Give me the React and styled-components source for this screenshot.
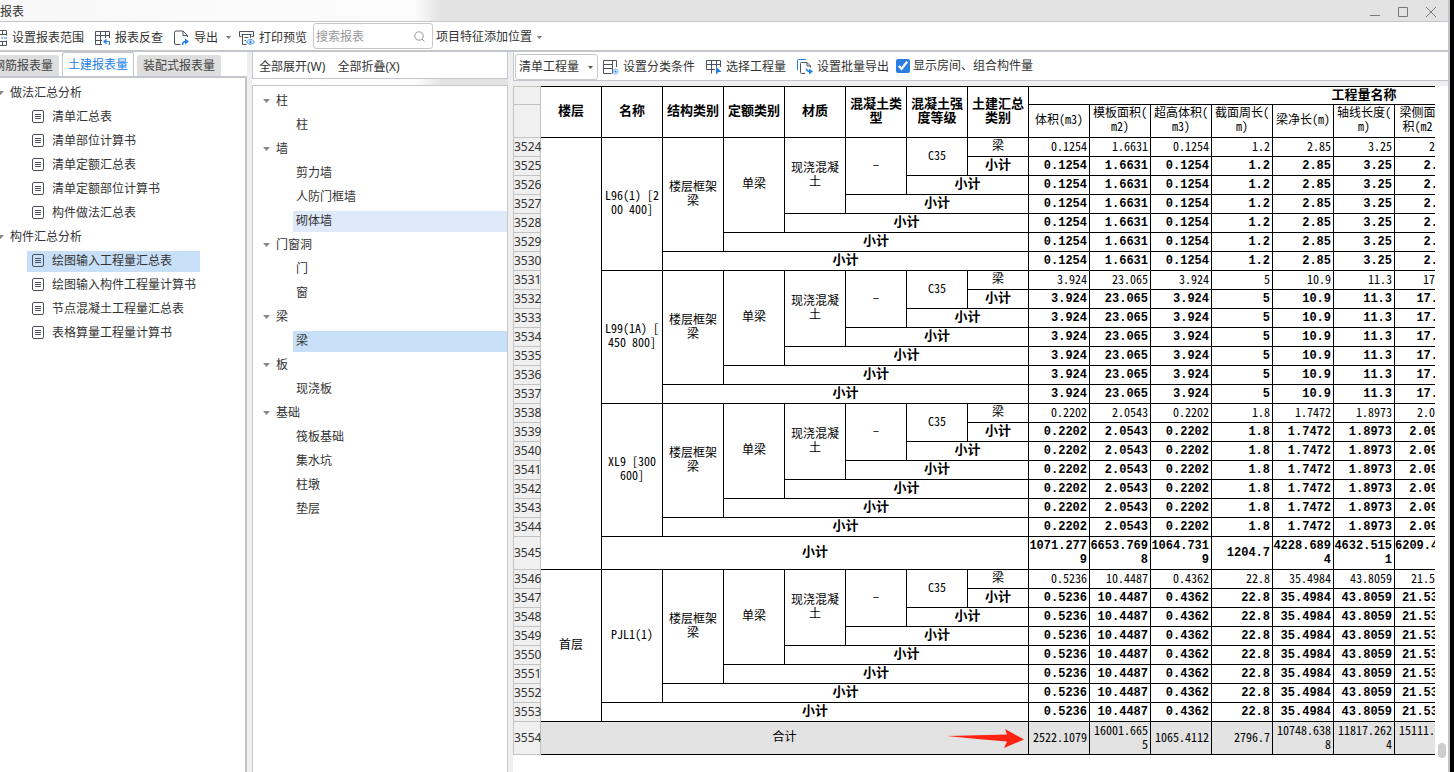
import React from "react";
import styled, { createGlobalStyle, css } from "styled-components";

const line = "#c3c6cc";
const uiFont = '"Noto Sans", "Noto Sans CJK SC", sans-serif';
const gridFont = '"Noto Sans Mono CJK SC", "DejaVu Sans Mono", "Noto Sans CJK SC", monospace';
const gridBold = '"Liberation Mono", "Noto Sans CJK SC", monospace';

const Global = createGlobalStyle`
  *, *::before, *::after { box-sizing: border-box; }
  body { margin: 0; background: #000; font: 12px/16px ${uiFont}; color: #333; }
  button, input, select { font: inherit; color: inherit; margin: 0; }
  ul { list-style: none; margin: 0; padding: 0; }
  svg { display: block; flex: none; }
`;

const Window = styled.div`
  min-height: 100vh;
  margin-right: 4px;
  display: flex;
  flex-direction: column;
  background: #fff;
  border-right: 2px solid #c0c3c8;
  overflow: hidden;
`;

const TitleBar = styled.header`
  height: 22px;
  display: flex;
  align-items: center;
  justify-content: space-between;
  padding: 1px 9px 0 0;
  background: linear-gradient(90deg, #f8f8f8 0, #fcfcfc 415px, #e3e3e3 440px);
  border-bottom: 1px solid ${line};
`;

const Title = styled.h1`
  margin: 0;
  padding-top: 2px;
  font-size: 12px;
  font-weight: 400;
`;

const WindowButtons = styled.div`
  display: flex;
  gap: 12px;
`;

const PlainButton = styled.button`
  display: flex;
  align-items: center;
  gap: ${(p) => p.$gap || 4}px;
  padding: 0;
  border: 0;
  background: none;
  white-space: nowrap;
  flex: none;
`;

const MenuCaret = styled(PlainButton)`
  margin: 0 -3px;
`;

const PositionButton = styled(PlainButton)`
  padding-top: 2px;
`;

const MainToolbar = styled.div`
  height: 30px;
  display: flex;
  align-items: center;
  border-bottom: 2px solid ${line};
  background: #fff;
`;

const ToolGroup = styled.div`
  display: flex;
  align-items: center;
  gap: 11px;
  padding-top: 3px;
  margin-left: -9px;
  margin-right: 6px;
`;

const SearchBox = styled.label`
  display: flex;
  align-items: center;
  width: 120px;
  height: 26px;
  padding: 1px 7px 0 2px;
  border: 1px solid #c8c8c8;
  border-radius: 3px;
  margin-right: 3px;
  input {
    flex: 1;
    min-width: 0;
    padding: 0;
    border: 0;
    outline: 0;
    background: none;
  }
  input::placeholder { color: #999; opacity: 1; }
`;

const Body = styled.main`
  flex: 1;
  display: flex;
  min-width: 0;
  background: #efeff0;
`;

const ReportPane = styled.nav`
  width: 247px;
  flex: none;
  display: flex;
  flex-direction: column;
`;

const Tabs = styled.div`
  display: flex;
  align-items: flex-end;
  gap: 3px;
  height: 24px;
  padding-right: 4px;
  background: #fff;
`;

const Tab = styled.button`
  flex: none;
  height: ${(p) => (p.$active ? 24 : 21)}px;
  padding: ${(p) => (p.$active ? "0 5px" : "1px 6px 0")};
  margin-left: ${(p) => (p.$cut ? -13 : 0)}px;
  border: ${(p) => (p.$active ? `1px solid ${line}` : "0")};
  border-bottom: 0;
  border-radius: 3px 3px 0 0;
  background: ${(p) => (p.$active ? "#fff" : "#dedede")};
  color: ${(p) => (p.$active ? "#2180e8" : "#444")};
  white-space: nowrap;
`;

const ReportTree = styled.div`
  flex: 1;
  padding-top: 3px;
  background: #fff;
  border-top: 2px solid ${line};
  border-right: 2px solid #c4c5c9;
`;

const TreeList = styled.ul`
  width: ${(p) => (p.$fit ? "fit-content" : "auto")};
`;

const TreeRow = styled.li`
  height: 24px;
  display: flex;
  align-items: center;
`;

const GroupButton = styled(PlainButton)`
  margin-left: ${(p) => p.$indent}px;
`;

const TreeItem = styled.button`
  flex: 1;
  height: 21px;
  display: flex;
  align-items: center;
  gap: 8px;
  margin-left: ${(p) => p.$indent}px;
  padding: 0 4px 0 ${(p) => p.$inset}px;
  border: 0;
  text-align: left;
  white-space: nowrap;
  background: ${(p) => (p.$selected ? "#c8dff8" : p.$hover ? "#dee9f9" : "transparent")};
  > svg { margin-bottom: 2px; }
`;

const ComponentPane = styled.section`
  width: 256px;
  flex: none;
  margin-left: 5px;
  display: flex;
  flex-direction: column;
  background: linear-gradient(90deg, #fff 0, #fcfcfc 165px, #e3e3e3 190px);
`;

const ExpandBar = styled.div`
  height: 27px;
  display: flex;
  align-items: center;
  gap: 12px;
  padding: 4px 6px 0;
  background: #fff;
  border: 1px solid ${line};
  border-top: 0;
`;

const ComponentTree = styled.div`
  flex: 1;
  margin-top: 6px;
  padding-top: 3px;
  background: #fff;
  border: 1px solid #c8c8cc;
  border-bottom: 0;
`;

const ResultPane = styled.section`
  flex: 1;
  min-width: 0;
  margin-left: 5px;
  display: flex;
  flex-direction: column;
`;

const ResultToolbar = styled.div`
  height: 29px;
  display: flex;
  align-items: center;
  gap: 11px;
  padding: 2px 1px 0;
  background: #fff;
  border: 1px solid ${line};
  border-top: 0;
  border-right: 0;
`;

const SelectBox = styled.div`
  display: grid;
  align-items: center;
  margin-right: -6px;
  > * { grid-area: 1 / 1; }
  > svg { justify-self: end; margin-right: 5px; pointer-events: none; }
  select {
    appearance: none;
    width: 83px;
    height: 26px;
    padding: 0 14px 0 3px;
    border: 1px solid #c8c8c8;
    border-radius: 3px;
    background: #fff;
  }
`;

const CheckLabel = styled.label`
  display: flex;
  align-items: center;
  gap: 3px;
  margin-left: -4px;
  padding-bottom: 2px;
  white-space: nowrap;
  input { width: 14px; height: 14px; accent-color: #2a7de1; }
`;

const SheetArea = styled.div`
  flex: 1;
  display: flex;
  margin-top: 5px;
  background: #fff;
`;

const SheetClip = styled.div`
  flex: 1;
  min-width: 0;
  overflow: hidden;
`;

const Scrollbar = styled.div`
  width: 13px;
  flex: none;
  display: flex;
  align-items: flex-end;
  padding: 0 2px 14px 3px;
`;

const Thumb = styled.div`
  width: 8px;
  height: 15px;
  border-radius: 4px;
  background: #cdcdcd;
`;

const Sheet = styled.table`
  width: 1187px;
  table-layout: fixed;
  border-collapse: separate;
  border-spacing: 0;
  color: #000;
  font: 12px/14px ${gridFont};
`;

const cell = css`
  padding: 0 1px;
  border-right: 1px solid #000;
  border-bottom: 1px solid #000;
  vertical-align: middle;
`;

const HeadCell = styled.th`
  ${cell}
  border-top: ${(p) => (p.$top ? "1px solid #000" : "0")};
  font: ${(p) => (p.$unit ? `400 12px/14px ${gridFont}` : `700 13px/14px ${gridBold}`)};
  padding-right: ${(p) => (p.$edge ? 16 : 1)}px;
  padding-bottom: ${(p) => (p.$unit ? 4 : 0)}px;
  white-space: ${(p) => (p.$unit ? "nowrap" : "normal")};
`;

const RowNumber = styled.th`
  height: ${(p) => (p.$tall ? 33 : 19)}px;
  padding: 0;
  border: 1px solid #c3c3c3;
  border-top-width: ${(p) => (p.$top ? 1 : 0)}px;
  background: #f0f0f0;
  color: #333;
  font: 12px/16px ${uiFont};
  text-align: center;
  white-space: nowrap;
`;

const TextCell = styled.td`
  ${cell}
  padding-bottom: 4px;
  text-align: center;
  white-space: pre-line;
`;

const SubtotalCell = styled(TextCell)`
  padding-bottom: 0;
  font: 700 13px/14px ${gridBold};
`;

const TotalCell = styled(TextCell)`
  position: relative;
  background: #e3e3e3;
  > svg { position: absolute; right: 4px; top: 7px; }
`;

const NumberCell = styled.td`
  ${cell}
  padding: 0 2px 2px 0;
  text-align: right;
  word-break: break-all;
  background: ${(p) => (p.$total ? "#e3e3e3" : "transparent")};
  ${(p) => p.$bold && css`
    padding-bottom: 0;
    font: 700 12px/14px ${gridBold};
  `}
  ${(p) => p.$edge && css`
    padding-right: ${p.$bold ? 17 : 20}px;
    white-space: nowrap;
    word-break: normal;
  `}
`;

const Caret = ({ w = 6, color = "#777" }) => (
  <svg width={w} height={Math.ceil(w / 2)} viewBox="0 0 6 3" preserveAspectRatio="none" aria-hidden="true">
    <path d="M0 0H6L3 3Z" fill={color} />
  </svg>
);

const Icon = ({ children, w = 16 }) => (
  <svg width={w} height="16" viewBox={`0 0 ${w} 16`} fill="none" stroke="#4c535e" aria-hidden="true">
    {children}
  </svg>
);

const RangeIcon = () => (
  <Icon>
    <path d="M1.500 5.500V.5H15.500V5.500M1.500 10.500V15.500H15.500V10.500M6.500 .5V5M6.500 11V15.500M11.500 .5V5M11.500 11V15.500M1.500 4.500H15.500M1.500 11.500H15.500" />
    <path d="M1 8H4M6 8H9M10 8H12M13 8H16" stroke="#2180e8" />
  </Icon>
);

const TraceIcon = () => (
  <Icon>
    <path d="M7 14.500H.5V1.500H14.500V8M.5 5.500H14.500M.5 10.500H7M5.500 1.500V14.500M10.500 1.500V8" />
    <path d="M14.500 15V11.500H9.500" stroke="#2180e8" />
    <path d="M8 11.500L11.500 8.500V14.500Z" fill="#2180e8" stroke="none" />
  </Icon>
);

const ExportIcon = () => (
  <Icon>
    <path d="M6.500 14.500H2Q.5 14.500 .5 13V2.500Q.5 1 2 1H9L13.500 5.500V7M9 1V5.500H13.500" />
    <path d="M8.500 15Q8.500 11.500 12 11.500" stroke="#2180e8" strokeWidth="1.500" />
    <path d="M11 8.500L15 11.500L11 14.500Z" fill="#2180e8" stroke="none" />
  </Icon>
);

const PreviewIcon = () => (
  <Icon>
    <path d="M2.500 6.500H.5V1.500H14.500V6.500H12.500M2.500 4.500H12.500M3.500 4.500V14.500H7.500M11.500 4.500V8M5.500 7.500H9.500M5.500 10.500H7" />
    <path d="M7.500 12Q11.500 7 15.500 12Q11.500 16.500 7.500 12Z" stroke="#2180e8" />
    <circle cx="11.500" cy="12" r="1.200" fill="#2180e8" stroke="none" />
  </Icon>
);

const ClassifyIcon = () => (
  <Icon>
    <path d="M8.500 14.500H.5V1.500H13.500V8M9.500 1.500V14.500M.5 5.500H9M.5 9.500H9" />
    <circle cx="12.500" cy="12.500" r="2.500" fill="#b9dcfb" stroke="#68adf0" strokeDasharray="1.500 .6" />
    <circle cx="12.500" cy="12.500" r=".8" fill="#2180e8" stroke="none" />
  </Icon>
);

const PickIcon = () => (
  <Icon>
    <path d="M9 10.500H.5V1.500H14.500V8M.5 5.500H14.500M5.500 1.500V14.500M10.500 1.500V8" />
    <path d="M10 7.500L15.500 13H12.500L10 15.500Z" fill="#2180e8" stroke="none" />
  </Icon>
);

const BatchIcon = () => (
  <Icon>
    <path d="M.5 11V1.500Q.5 .5 1.500 .5H9" stroke="#2180e8" />
    <path d="M8 14.500H4.500Q3.500 14.500 3.500 13.500V4.500Q3.500 3.500 4.500 3.500H10L13.500 7V8.500M10 3.500V7H13.500" />
    <path d="M9.500 9.500Q9.500 12.500 13 12.500" stroke="#2180e8" strokeWidth="1.500" />
    <path d="M12 9.500L16 12.500L12 15.500Z" fill="#2180e8" stroke="none" />
  </Icon>
);

const SheetIcon = () => (
  <svg width="12" height="13" viewBox="0 0 12 13" fill="none" stroke="#4c535e" aria-hidden="true">
    <rect x=".5" y=".5" width="11" height="12" rx="1.500" />
    <path d="M3 4.500H9M3 6.500H9M3 8.500H9" />
  </svg>
);

const SearchIcon = () => (
  <svg width="11" height="11" viewBox="0 0 11 11" fill="none" stroke="#999" aria-hidden="true">
    <circle cx="5" cy="5" r="4.200" />
    <path d="M8 8L10.500 10.500" />
  </svg>
);

const Arrow = () => (
  <svg width="77" height="20" viewBox="0 0 77 20" aria-hidden="true">
    <path d="M0 7L60 5.500L58 0L77 10.500L57 19L60 12.500L30 10Z" fill="#ff2314" />
  </svg>
);

const WindowIcon = ({ d }) => (
  <svg width="16" height="16" viewBox="0 0 16 16" fill="none" stroke="#777" aria-hidden="true">
    <path d={d} />
  </svg>
);

const reports = [
  ["做法汇总分析", ["清单汇总表", "清单部位计算书", "清单定额汇总表", "清单定额部位计算书", "构件做法汇总表"]],
  ["构件汇总分析", ["绘图输入工程量汇总表", "绘图输入构件工程量计算书", "节点混凝土工程量汇总表", "表格算量工程量计算书"]],
];

const components = [
  ["柱", ["柱"]],
  ["墙", ["剪力墙", "人防门框墙", "砌体墙"]],
  ["门窗洞", ["门", "窗"]],
  ["梁", ["梁"]],
  ["板", ["现浇板"]],
  ["基础", ["筏板基础", "集水坑", "柱墩", "垫层"]],
];

const headings = ["楼层", "名称", "结构类别", "定额类别", "材质", "混凝土类型", "混凝土强度等级", "土建汇总类别"];
const units = [
  ["体积(m3)"],
  ["模板面积(", "m2)"],
  ["超高体积(", "m3)"],
  ["截面周长(", "m)"],
  ["梁净长(m)"],
  ["轴线长度(", "m)"],
  ["梁侧面", "积(m2"],
];

const beams = [
  { start: 3524, name: "L96(1) [2\n00 400]", values: ["0.1254", "1.6631", "0.1254", "1.2", "2.85", "3.25"], edge: ["2", "2."] },
  { start: 3531, name: "L99(1A) [\n450 800]", values: ["3.924", "23.065", "3.924", "5", "10.9", "11.3"], edge: ["17", "17."] },
  { start: 3538, name: "XL9 [300\n600]", values: ["0.2202", "2.0543", "0.2202", "1.8", "1.7472", "1.8973"], edge: ["2.0", "2.09"] },
];
const groundBeam = { start: 3546, name: "PJL1(1)", values: ["0.5236", "10.4487", "0.4362", "22.8", "35.4984", "43.8059"], edge: ["21.5", "21.53"] };

const Values = ({ values, edge, bold, total }) => (
  <>
    {values.map((v, i) => (
      <NumberCell key={i} $bold={bold} $total={total}>{v}</NumberCell>
    ))}
    <NumberCell $bold={bold} $total={total} $edge>{edge}</NumberCell>
    {[0, 1, 2, 3].map((i) => (
      <NumberCell key={`rest${i}`} $total={total} />
    ))}
  </>
);

const BeamRows = ({ beam, floor }) => (
  <>
    <tr>
      <RowNumber scope="row">{beam.start}</RowNumber>
      {floor && <TextCell rowSpan={floor.span}>{floor.label}</TextCell>}
      <TextCell rowSpan={7}>{beam.name}</TextCell>
      <TextCell rowSpan={6}>{"楼层框架\n梁"}</TextCell>
      <TextCell rowSpan={5}>单梁</TextCell>
      <TextCell rowSpan={4}>{"现浇混凝\n土"}</TextCell>
      <TextCell rowSpan={3}>–</TextCell>
      <TextCell rowSpan={2}>C35</TextCell>
      <TextCell>梁</TextCell>
      <Values values={beam.values} edge={beam.edge[0]} />
    </tr>
    {[1, 2, 3, 4, 5, 6].map((n) => (
      <tr key={n}>
        <RowNumber scope="row">{beam.start + n}</RowNumber>
        <SubtotalCell colSpan={n}>小计</SubtotalCell>
        <Values values={beam.values} edge={beam.edge[1]} bold />
      </tr>
    ))}
  </>
);

const ResultSheet = () => (
  <Sheet>
    <colgroup>
      <col width="28" />
      {Array.from({ length: 19 }, (_, i) => <col key={i} width="61" />)}
    </colgroup>
    <thead>
      <tr>
        <RowNumber $top />
        {headings.map((h) => <HeadCell key={h} rowSpan={2} scope="col" $top>{h}</HeadCell>)}
        <HeadCell colSpan={11} scope="colgroup" $top>工程量名称</HeadCell>
      </tr>
      <tr>
        <RowNumber $tall />
        {units.map((u, i) => (
          <HeadCell key={i} scope="col" $unit $edge={i === 6}>
            {u[0]}{u[1] && <><br />{u[1]}</>}
          </HeadCell>
        ))}
        {[0, 1, 2, 3].map((i) => <HeadCell key={`rest${i}`} $unit />)}
      </tr>
    </thead>
    <tbody>
      {beams.map((b, i) => (
        <BeamRows key={b.start} beam={b} floor={i === 0 ? { span: 22, label: "" } : null} />
      ))}
      <tr>
        <RowNumber scope="row" $tall>3545</RowNumber>
        <SubtotalCell colSpan={7}>小计</SubtotalCell>
        <Values values={["1071.2779", "6653.7698", "1064.7319", "1204.7", "4228.6894", "4632.5151"]} edge={<>6209.4<br />&nbsp;</>} bold />
      </tr>
      <BeamRows beam={groundBeam} floor={{ span: 8, label: "首层" }} />
      <tr>
        <RowNumber scope="row">3553</RowNumber>
        <SubtotalCell colSpan={7}>小计</SubtotalCell>
        <Values values={groundBeam.values} edge="21.53" bold />
      </tr>
      <tr>
        <RowNumber scope="row" $tall>3554</RowNumber>
        <TotalCell colSpan={8}>合计<Arrow /></TotalCell>
        <Values values={["2522.1079", "16001.6655", "1065.4112", "2796.7", "10748.6388", "11817.2624"]} edge={<>15111.<br />&nbsp;</>} total />
      </tr>
    </tbody>
  </Sheet>
);

export default function App() {
  return (
    <>
      <Global />
      <Window>
        <TitleBar>
          <Title>报表</Title>
          <WindowButtons>
            <PlainButton aria-label="最小化"><WindowIcon d="M3 12.500H13" /></PlainButton>
            <PlainButton aria-label="最大化"><WindowIcon d="M3.500 4.500H12.500V13.500H3.500Z" /></PlainButton>
            <PlainButton aria-label="关闭"><WindowIcon d="M3 4L13 14M13 4L3 14" /></PlainButton>
          </WindowButtons>
        </TitleBar>
        <MainToolbar>
          <ToolGroup>
            <PlainButton $gap={5}><RangeIcon />设置报表范围</PlainButton>
            <PlainButton><TraceIcon />报表反查</PlainButton>
            <PlainButton><ExportIcon />导出</PlainButton>
            <MenuCaret aria-label="导出选项"><Caret w={5} /></MenuCaret>
            <PlainButton><PreviewIcon />打印预览</PlainButton>
          </ToolGroup>
          <SearchBox>
            <input type="text" placeholder="搜索报表" aria-label="搜索报表" />
            <SearchIcon />
          </SearchBox>
          <PositionButton $gap={5}>项目特征添加位置<Caret w={5} /></PositionButton>
        </MainToolbar>
        <Body>
          <ReportPane>
            <Tabs role="tablist">
              <Tab role="tab" $cut>钢筋报表量</Tab>
              <Tab role="tab" aria-selected="true" $active>土建报表量</Tab>
              <Tab role="tab">装配式报表量</Tab>
            </Tabs>
            <ReportTree>
              <TreeList $fit>
                {reports.map(([group, items]) => (
                  <React.Fragment key={group}>
                    <TreeRow>
                      <GroupButton $gap={6} $indent={-3}><Caret w={7} color="#888" />{group}</GroupButton>
                    </TreeRow>
                    {items.map((item) => (
                      <TreeRow key={item}>
                        <TreeItem $indent={27} $inset={5} $selected={item === "绘图输入工程量汇总表"}>
                          <SheetIcon />{item}
                        </TreeItem>
                      </TreeRow>
                    ))}
                  </React.Fragment>
                ))}
              </TreeList>
            </ReportTree>
          </ReportPane>
          <ComponentPane>
            <ExpandBar>
              <PlainButton>全部展开(W)</PlainButton>
              <PlainButton>全部折叠(X)</PlainButton>
            </ExpandBar>
            <ComponentTree>
              <TreeList>
                {components.map(([group, items]) => (
                  <React.Fragment key={group}>
                    <TreeRow>
                      <GroupButton $gap={6} $indent={10}><Caret w={7} color="#888" />{group}</GroupButton>
                    </TreeRow>
                    {items.map((item) => (
                      <TreeRow key={item}>
                        <TreeItem $indent={40} $inset={3} $selected={group === "梁"} $hover={item === "砌体墙"}>
                          {item}
                        </TreeItem>
                      </TreeRow>
                    ))}
                  </React.Fragment>
                ))}
              </TreeList>
            </ComponentTree>
          </ComponentPane>
          <ResultPane>
            <ResultToolbar>
              <SelectBox>
                <select aria-label="工程量类型" defaultValue="清单工程量">
                  <option>清单工程量</option>
                </select>
                <Caret w={5} color="#555" />
              </SelectBox>
              <PlainButton><ClassifyIcon />设置分类条件</PlainButton>
              <PlainButton><PickIcon />选择工程量</PlainButton>
              <PlainButton><BatchIcon />设置批量导出</PlainButton>
              <CheckLabel>
                <input type="checkbox" defaultChecked />显示房间、组合构件量
              </CheckLabel>
            </ResultToolbar>
            <SheetArea>
              <SheetClip><ResultSheet /></SheetClip>
              <Scrollbar><Thumb /></Scrollbar>
            </SheetArea>
          </ResultPane>
        </Body>
      </Window>
    </>
  );
}
